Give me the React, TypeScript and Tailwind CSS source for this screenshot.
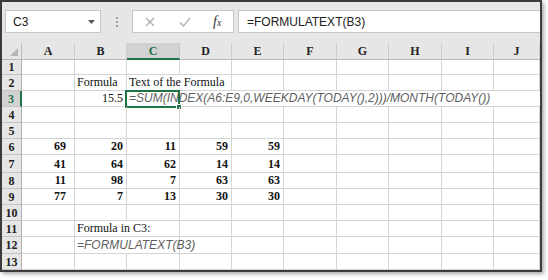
import type { ReactNode } from "react";

const COLS = ["A", "B", "C", "D", "E", "F", "G", "H", "I", "J"];

type Cell = {
  span?: number;
  text?: ReactNode;
  right?: boolean;
  bold?: boolean;
  italic?: boolean;
  selected?: boolean;
  indent?: boolean;
};

const empty = (n: number): Cell[] => Array.from({ length: n }, () => ({}));

const nums = (vals: number[]): Cell[] => [
  ...vals.map((v, i) => ({ text: String(v), right: true, bold: true, indent: i === 0 })),
  ...empty(5),
];

const ROWS: Cell[][] = [
  empty(10),
  [{}, { text: "Formula" }, { span: 2, text: "Text of the Formula" }, ...empty(6)],
  [
    {},
    { text: "15.5", right: true },
    {
      span: 8,
      italic: true,
      selected: true,
      text: "=SUM(INDEX(A6:E9,0,WEEKDAY(TODAY(),2)))/MONTH(TODAY())",
    },
  ],
  empty(10),
  empty(10),
  nums([69, 20, 11, 59, 59]),
  nums([41, 64, 62, 14, 14]),
  nums([11, 98, 7, 63, 63]),
  nums([77, 7, 13, 30, 30]),
  empty(10),
  [{}, { span: 2, text: "Formula in C3:" }, ...empty(7)],
  [{}, { span: 2, italic: true, text: "=FORMULATEXT(B3)" }, ...empty(7)],
  empty(10),
];

const spanClass: Record<number, string> = {
  1: "",
  2: "col-span-2",
  8: "col-span-8 border-r-0",
};

function GridCell({ cell }: { cell: Cell }) {
  return (
    <div
      className={`relative flex items-end border-r border-b border-[#d4d4d4] px-[2px] pb-[1px] leading-[14px] whitespace-nowrap ${
        spanClass[cell.span ?? 1]
      } ${cell.right ? (cell.indent ? "justify-end pr-[8px]" : "justify-end pr-[3px]") : ""} ${
        cell.italic
          ? "font-['Liberation_Sans',Arial,sans-serif] italic text-[12px] text-[#5f5f5f]"
          : "font-['Liberation_Serif','Times_New_Roman',serif] text-[12px] text-[#111]"
      } ${cell.bold ? "font-bold" : ""}`}
    >
      {cell.text}
      {cell.selected && (
        <div className="absolute left-[-2px] top-[-1px] w-[55px] h-[18px] border-2 border-[#217346]">
          <div className="absolute right-[-4px] bottom-[-4px] w-[6px] h-[6px] bg-[#217346] border border-white" />
        </div>
      )}
    </div>
  );
}

export default function App() {
  return (
    <div className="w-[548px] h-[280px] bg-white">
      <div className="w-[542px] h-[272px] border-2 border-[#3b3b3b] bg-[#e6e6e6] shadow-[2px_2px_4px_rgba(0,0,0,0.35)] flex flex-col overflow-hidden">
        {/* formula bar */}
        <div className="h-[41px] shrink-0 flex items-start pt-[8px] font-['Liberation_Sans',Arial,sans-serif] text-[12px] text-[#222]">
          <div className="ml-[3px] w-[96px] h-[23px] bg-white border border-[#c6c6c6] flex items-center pl-[7px] pr-[5px]">
            <span className="flex-1">C3</span>
            <svg width="7" height="4" viewBox="0 0 7 4">
              <path d="M0 0h7L3.5 4z" fill="#555" />
            </svg>
          </div>
          <div className="w-[31px] h-[23px] flex flex-col items-center justify-center gap-[2px]">
            <span className="w-[2px] h-[2px] bg-[#a0a0a0]" />
            <span className="w-[2px] h-[2px] bg-[#a0a0a0]" />
            <span className="w-[2px] h-[2px] bg-[#a0a0a0]" />
          </div>
          <div className="w-[102px] h-[23px] bg-white border border-[#c6c6c6] flex items-center">
            <svg className="ml-[12px]" width="10" height="10" viewBox="0 0 10 10">
              <path d="M1 1l8 8M9 1l-8 8" stroke="#a8a8a8" strokeWidth="1.2" fill="none" />
            </svg>
            <svg className="ml-[24px]" width="12" height="10" viewBox="0 0 12 10">
              <path d="M1 5.5l3.5 3.5L11 1" stroke="#b0b0b0" strokeWidth="1.3" fill="none" />
            </svg>
            <span className="ml-[22px] font-['Liberation_Serif',serif] italic text-[14px] text-[#333] leading-none">
              f<span className="text-[10px]">x</span>
            </span>
          </div>
          <div className="ml-[4px] flex-1 h-[23px] bg-white border border-[#c6c6c6] border-r-0 flex items-center pl-[8px]">
            =FORMULATEXT(B3)
          </div>
        </div>

        {/* sheet */}
        <div className="grid grid-cols-[20px_53px_52px_53px_52px_52px_53px_52px_53px_52px_46px] grid-rows-[17px_15px_16px_16px_16px_16px_16px_18px_16px_16px_16px_16px_17px_16px] bg-white">
          <div className="relative bg-[#e6e6e6] border-r border-b border-[#b8b8b8]">
            <svg className="absolute right-[3px] bottom-[3px]" width="8" height="8" viewBox="0 0 8 8">
              <path d="M8 0v8H0z" fill="#b5b5b5" />
            </svg>
          </div>
          {COLS.map((c) => (
            <div
              key={c}
              className={`flex items-center justify-center font-['Liberation_Serif',serif] font-bold text-[12px] border-r ${
                c === "C"
                  ? "bg-[#d2d2d2] text-[#217346] border-b-2 border-b-[#217346] border-r-[#c4c4c4]"
                  : "bg-[#e6e6e6] text-[#222] border-b border-b-[#b8b8b8] border-r-[#cdcdcd]"
              }`}
            >
              {c}
            </div>
          ))}
          {ROWS.map((row, i) => (
            <RowCells key={i} index={i + 1} cells={row} />
          ))}
        </div>
      </div>
    </div>
  );
}

function RowCells({ index, cells }: { index: number; cells: Cell[] }) {
  const sel = index === 3;
  return (
    <>
      <div
        className={`flex items-center justify-center font-['Liberation_Serif',serif] font-bold text-[12px] border-b border-b-[#c4c4c4] ${
          sel
            ? "bg-[#d2d2d2] text-[#217346] border-r-2 border-r-[#217346]"
            : "bg-[#e6e6e6] text-[#222] border-r border-r-[#b0b0b0]"
        }`}
      >
        {index}
      </div>
      {cells.map((cell, j) => (
        <GridCell key={j} cell={cell} />
      ))}
    </>
  );
}
